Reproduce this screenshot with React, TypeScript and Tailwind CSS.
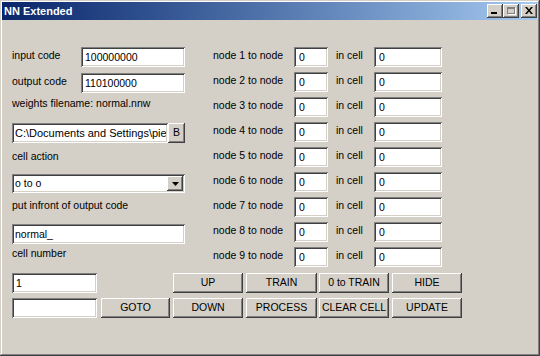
import React from "react";

const sunken =
  "bg-white shadow-[inset_1px_1px_#808080,inset_-1px_-1px_#ffffff,inset_2px_2px_#404040,inset_-2px_-2px_#d4d0c8]";
const raised =
  "bg-[#d4d0c8] shadow-[inset_-1px_-1px_#404040,inset_1px_1px_#ffffff,inset_-2px_-2px_#808080]";

function Field({
  value,
  w,
  pl = "pl-[4px]",
  size = "text-[10.5px]",
}: {
  value: string;
  w: string;
  pl?: string;
  size?: string;
}) {
  return (
    <input
      readOnly
      value={value}
      className={`${sunken} ${w} h-[20px] ${pl} pr-[2px] ${size} text-black outline-none`}
    />
  );
}

function Btn({ label, w, cls = "" }: { label: string; w: string; cls?: string }) {
  return (
    <button
      className={`${raised} ${w} ${cls} h-[20px] flex items-center justify-center text-[10.5px] text-black whitespace-nowrap`}
    >
      {label}
    </button>
  );
}

function Label({ children, cls = "" }: { children: React.ReactNode; cls?: string }) {
  return <div className={`h-[13px] leading-[13px] text-[10.5px] text-black whitespace-nowrap ${cls}`}>{children}</div>;
}

export default function App() {
  const nodes = [1, 2, 3, 4, 5, 6, 7, 8, 9];
  return (
    <div className="w-[540px] h-[356px] bg-[#d4d0c8] flex flex-col pt-[2px] pl-[2px] pr-[3px] font-['Liberation_Sans',Arial,sans-serif] shadow-[inset_-1px_-1px_#404040,inset_1px_1px_#d4d0c8,inset_-2px_-2px_#808080,inset_2px_2px_#ffffff]">
      {/* title bar */}
      <div className="h-[18px] bg-linear-to-r from-[#0a246a] to-[#a6caf0] flex items-center pl-[2px] pr-[0px]">
        <span className="text-white font-bold text-[11px] leading-[13px]">NN Extended</span>
        <div className="ml-auto flex items-center">
          <div className={`${raised} w-[16px] h-[14px] relative`}>
            <div className="absolute left-[4px] top-[8px] w-[6px] h-[2px] bg-black" />
          </div>
          <div className={`${raised} w-[16px] h-[14px] relative`}>
            <div className="absolute left-[4px] top-[3px] w-[8px] h-[7px] border border-t-2 border-[#808080] shadow-[1px_1px_#ffffff]" />
          </div>
          <div className={`${raised} w-[16px] h-[14px] ml-[2px] flex items-center justify-center`}>
            <svg width="8" height="7" viewBox="0 0 8 7" className="-mt-[1px]">
              <path d="M0 0h2l2 2.5L6 0h2L5 3.5 8 7H6L4 4.5 2 7H0l3-3.5z" fill="#000" />
            </svg>
          </div>
        </div>
      </div>

      {/* content */}
      <div className="flex flex-col pl-[10px] pt-[27px]">
        <div className="flex h-[220px]">
          {/* left column */}
          <div className="w-[173px] flex flex-col">
            <div className="flex h-[20px]">
              <Label cls="flex-1 mt-[2px]">input code</Label>
              <Field value="100000000" w="w-[104px]" />
            </div>
            <div className="flex h-[20px] mt-[6px]">
              <Label cls="flex-1 mt-[2px]">output code</Label>
              <Field value="110100000" w="w-[104px]" />
            </div>
            <Label cls="mt-[4px]">weights filename: normal.nnw</Label>
            <div className="flex h-[20px] mt-[13px]">
              <Field value="C:\Documents and Settings\pierre" w="w-[156px]" pl="pl-[3px]" size="text-[11px]" />
              <Btn label="B" w="w-[17px]" />
            </div>
            <Label cls="mt-[7px]">cell action</Label>
            <div className={`${sunken} mt-[11px] h-[19px] flex items-center pl-[3px] pr-[2px]`}>
              <span className="text-[10.5px] text-black flex-1">o to o</span>
              <div className={`${raised} w-[16px] h-[15px] flex items-center justify-center`}>
                <svg width="7" height="4" viewBox="0 0 7 4">
                  <path d="M0 0h7L3.5 4z" fill="#000" />
                </svg>
              </div>
            </div>
            <Label cls="mt-[6px]">put infront of output code</Label>
            <div className="mt-[12px] flex">
              <Field value="normal_" w="w-[173px]" pl="pl-[3px]" />
            </div>
            <Label cls="mt-[3px]">cell number</Label>
          </div>

          {/* node column */}
          <div className="ml-[28px] flex flex-col gap-[5px]">
            {nodes.map((n) => (
              <div key={n} className="flex h-[20px]">
                <Label cls="w-[81px] mt-[2px]">{`node ${n} to node`}</Label>
                <Field value="0" w="w-[34px]" pl="pl-[5px]" />
                <Label cls="w-[46px] pl-[8px] mt-[2px]">in cell</Label>
                <Field value="0" w="w-[68px]" pl="pl-[5px]" />
              </div>
            ))}
          </div>
        </div>

        {/* bottom rows */}
        <div className="mt-[6px] flex flex-col gap-[5px]">
          <div className="flex">
            <Field value="1" w="w-[85px]" pl="pl-[4px]" />
            <Btn label="UP" w="w-[70px]" cls="ml-[76px]" />
            <Btn label="TRAIN" w="w-[71px]" cls="ml-[3px]" />
            <Btn label="0 to TRAIN" w="w-[70px]" cls="ml-[2px]" />
            <Btn label="HIDE" w="w-[70px]" cls="ml-[3px]" />
          </div>
          <div className="flex">
            <Field value="" w="w-[85px]" />
            <Btn label="GOTO" w="w-[69px]" cls="ml-[4px]" />
            <Btn label="DOWN" w="w-[70px]" cls="ml-[3px]" />
            <Btn label="PROCESS" w="w-[71px]" cls="ml-[3px]" />
            <Btn label="CLEAR CELL" w="w-[70px]" cls="ml-[2px]" />
            <Btn label="UPDATE" w="w-[70px]" cls="ml-[3px]" />
          </div>
        </div>
      </div>
    </div>
  );
}
